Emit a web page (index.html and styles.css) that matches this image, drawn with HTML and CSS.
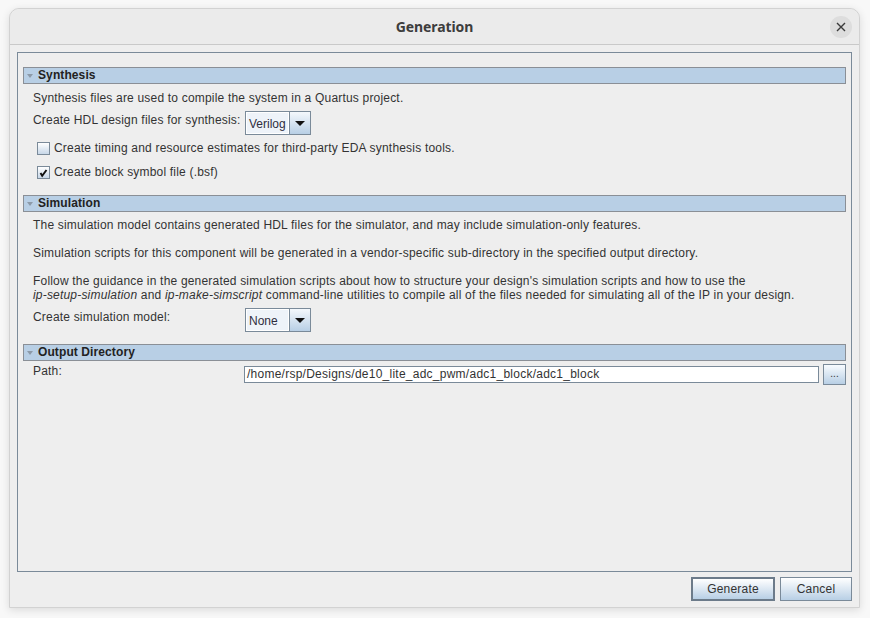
FILE: index.html
```html
<!DOCTYPE html>
<html>
<head>
<meta charset="utf-8">
<link rel="stylesheet" href="styles.css">
</head>
<body>
<div class="window">
  <div class="titlebar">
    <span class="title">Generation</span>
    <span class="close"><svg width="10" height="10" viewBox="0 0 10 10"><path d="M1 1L9 9M9 1L1 9" stroke="#3a3a3a" stroke-width="1.4"/></svg></span>
  </div>
  <div class="body">
    <div class="panel">
      <div class="header"><span class="tri"></span>Synthesis</div>
      <div class="line l-desc">Synthesis files are used to compile the system in a Quartus project.</div>
      <div class="row r-hdl">
        <div class="label">Create HDL design files for synthesis:</div>
        <div class="combo"><span class="combo-text">Verilog</span><span class="combo-btn"><span class="arrow"></span></span></div>
      </div>
      <div class="check-row">
        <span class="cb"></span><span>Create timing and resource estimates for third-party EDA synthesis tools.</span>
      </div>
      <div class="check-row">
        <span class="cb"><svg width="11" height="11" viewBox="0 0 11 11"><path d="M2.5 6L4.2 8.8L8.5 3" fill="none" stroke="#111" stroke-width="1.9"/></svg></span><span>Create block symbol file (.bsf)</span>
      </div>

      <div class="header h-sim"><span class="tri"></span>Simulation</div>
      <div class="line l-sim1">The simulation model contains generated HDL files for the simulator, and may include simulation-only features.</div>
      <div class="line l-sim2">Simulation scripts for this component will be generated in a vendor-specific sub-directory in the specified output directory.</div>
      <div class="para">Follow the guidance in the generated simulation scripts about how to structure your design's simulation scripts and how to use the<br><i>ip-setup-simulation</i> and <i>ip-make-simscript</i> command-line utilities to compile all of the files needed for simulating all of the IP in your design.</div>
      <div class="row r-sim">
        <div class="label">Create simulation model:</div>
        <div class="combo"><span class="combo-text">None</span><span class="combo-btn"><span class="arrow"></span></span></div>
      </div>

      <div class="header h-out"><span class="tri"></span>Output Directory</div>
      <div class="path-row">
        <div class="label path-label">Path:</div>
        <div class="field">/home/rsp/Designs/de10_lite_adc_pwm/adc1_block/adc1_block</div>
        <div class="browse">...</div>
      </div>
    </div>
    <div class="buttons">
      <div class="btn btn-default">Generate</div>
      <div class="btn btn-cancel">Cancel</div>
    </div>
  </div>
</div>
</body>
</html>
```

FILE: styles.css
```css
html, body {
  margin: 0;
  padding: 0;
}
body {
  background: #f8f8f8;
  width: 870px;
  height: 618px;
  overflow: hidden;
  font-family: "Liberation Sans", Arial, sans-serif;
  font-size: 12px;
  letter-spacing: 0.19px;
  color: #333333;
}
.window {
  margin: 8px 0 0 9px;
  width: 851px;
  height: 600px;
  box-sizing: border-box;
  border: 1px solid #d2d2d2;
  border-radius: 10px 10px 0 0;
  background: #eeeeee;
  box-shadow: 0 2px 8px rgba(0,0,0,0.12);
  display: flex;
  flex-direction: column;
}
.titlebar {
  height: 35px;
  border-bottom: 1px solid #c9c9c9;
  background: #ebebeb;
  border-radius: 10px 10px 0 0;
  display: flex;
  align-items: center;
  justify-content: center;
  position: relative;
}
.title {
  font-family: "Noto Sans", "Open Sans", sans-serif;
  font-weight: bold;
  font-size: 14px;
  color: #3d3d3d;
  letter-spacing: -0.1px;
}
.close {
  position: absolute;
  right: 7px;
  top: 7px;
  width: 22px;
  height: 22px;
  border-radius: 50%;
  background: #dddddd;
  display: flex;
  align-items: center;
  justify-content: center;
}
.body {
  flex: 1;
  display: flex;
  flex-direction: column;
  padding: 7px 7px 6px 7px;
}
.panel {
  height: 520px;
  box-sizing: border-box;
  border: 1px solid #7a8a99;
  padding: 14px 5px 0 5px;
  display: flex;
  flex-direction: column;
}
.header {
  height: 15px;
  border: 1px solid #8a8f96;
  background: #b8cfe5;
  font-weight: bold;
  font-size: 12px;
  letter-spacing: 0.1px;
  color: #222;
  line-height: 15px;
  display: flex;
  align-items: center;
}
.tri {
  width: 0;
  height: 0;
  border-left: 3px solid transparent;
  border-right: 3px solid transparent;
  border-top: 4px solid #8c9aa8;
  margin: 0 5px 0 3px;
}
.line {
  line-height: 16px;
  padding-left: 10px;
}
.l-desc { margin-top: 6px; }
.row {
  display: flex;
  align-items: flex-start;
  padding-left: 10px;
}
.r-hdl { margin-top: 5px; }
.label {
  width: 212px;
  line-height: 16px;
  padding-top: 1px;
}
.combo {
  display: flex;
  height: 24px;
  width: 66px;
  box-sizing: border-box;
  border: 1px solid #7a8a99;
  background: #ffffff;
}
.combo-text {
  flex: 1;
  margin: 1px;
  background: #eef3f9;
  line-height: 22px;
  padding-left: 2px;
  color: #2e2e3e;
  font-size: 12px;
  letter-spacing: 0;
}
.combo-btn {
  width: 20px;
  border-left: 1px solid #7a8a99;
  background: linear-gradient(#f4f8fc, #b8cfe5);
  display: flex;
  align-items: center;
  justify-content: center;
}
.arrow {
  width: 0;
  height: 0;
  border-left: 5px solid transparent;
  border-right: 5px solid transparent;
  border-top: 5px solid #111;
  margin-top: 1px;
}
.check-row {
  height: 24px;
  display: flex;
  align-items: center;
  padding-left: 14px;
  margin-top: 1px;
}
.check-row + .check-row { margin-top: 0; }
.cb {
  width: 11px;
  height: 11px;
  border: 1px solid #7a8a99;
  background: linear-gradient(#ffffff, #c7d7e8);
  margin-right: 4px;
  display: flex;
  align-items: center;
  justify-content: center;
}
.h-sim { margin-top: 11px; }
.l-sim1 { margin-top: 5px; }
.l-sim2 { margin-top: 12px; }
.para {
  margin-top: 13px;
  line-height: 14px;
  padding-left: 10px;
}
.r-sim { margin-top: 6px; }
.h-out { margin-top: 12px; }
.path-row {
  display: flex;
  align-items: flex-start;
  padding-left: 10px;
  margin-top: 3px;
}
.path-label {
  width: 211px;
  line-height: 14px;
  padding-top: 0;
}
.field {
  margin-top: 2px;
  width: 575px;
  height: 17px;
  box-sizing: border-box;
  border: 1px solid #7a8a99;
  background: #ffffff;
  line-height: 15px;
  padding-left: 2px;
  font-size: 12px;
  letter-spacing: 0.25px;
}
.browse {
  margin-left: 4px;
  width: 23px;
  height: 21px;
  box-sizing: border-box;
  border: 1px solid #7a8a99;
  background: linear-gradient(#f8fbfe, #b8cfe5);
  font-size: 10px;
  letter-spacing: 0;
  text-align: center;
  line-height: 17px;
  color: #333;
}
.buttons {
  display: flex;
  justify-content: flex-end;
  gap: 5px;
  margin-top: 5px;
}
.btn {
  height: 24px;
  box-sizing: border-box;
  border: 1px solid #7a8a99;
  background: linear-gradient(#ffffff, #b8cfe5);
  display: flex;
  align-items: center;
  justify-content: center;
  font-size: 12px;
  color: #333;
}
.btn-default {
  width: 84px;
  border: 2px solid #6c7b8a;
}
.btn-cancel {
  width: 72px;
}
```
